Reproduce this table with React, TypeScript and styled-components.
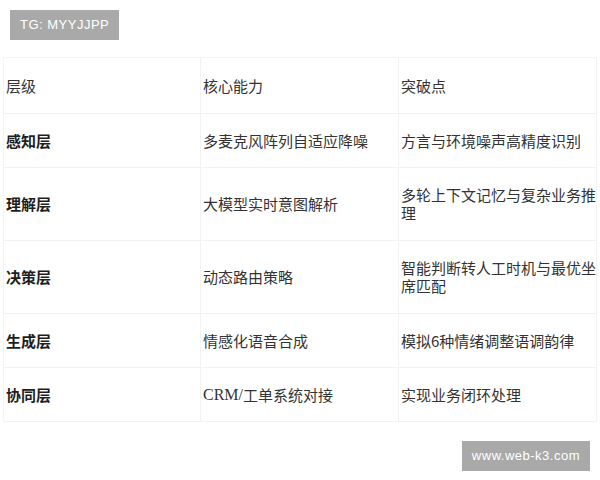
import React from "react";
import styled, { createGlobalStyle } from "styled-components";

const Global = createGlobalStyle`
  html, body { margin: 0; padding: 0; background: #fff; }
  body { font-family: "Noto Sans CJK SC", "Noto Sans", sans-serif; }
`;

const Page = styled.div`
  width: 600px;
  height: 480px;
  box-sizing: border-box;
  padding: 10px 8px 0 3px;
  display: flex;
  flex-direction: column;
`;

const Tag = styled.div`
  background: #a9a9a9;
  color: #fff;
  font-family: "Liberation Sans", Arial, sans-serif;
  font-size: 13px;
  letter-spacing: 0.5px;
  height: 30px;
  line-height: 30px;
  padding: 0 10px;
  box-sizing: border-box;
`;

const TopTag = styled(Tag)`
  align-self: flex-start;
  margin-left: 7px;
`;

const Watermark = styled(Tag)`
  align-self: flex-end;
  margin-top: 19px;
  margin-right: 2px;
`;

const Table = styled.div`
  margin-top: 17px;
  width: 593px;
  display: grid;
  grid-template-columns: 197px 198px 198px;
  border-top: 1px solid #f4f4f4;
  border-left: 1px solid #f4f4f4;
`;

const Cell = styled.div<{ $head?: boolean; $bold?: boolean }>`
  box-sizing: border-box;
  border-right: 1px solid #f2f2f2;
  border-bottom: 1px solid #f2f2f2;
  min-height: ${(p) => (p.$head ? 56 : 54)}px;
  padding: 0 0 0 2px;
  display: flex;
  align-items: center;
  font-size: 15px;
  line-height: 18px;
  color: ${(p) => (p.$bold ? "#1e1e1e" : "#333")};
  font-weight: ${(p) => (p.$bold ? 700 : 400)};
`;

const CellText = styled.span<{ $tall?: boolean }>`
  display: block;
  padding: ${(p) => (p.$tall ? "18px 0" : "0")};
`;

const Latin = styled.span`
  font-family: "Liberation Serif", "Times New Roman", serif;
  font-size: 16px;
`;

type Row = { name: string; core: React.ReactNode; point: string; tall?: boolean };

const rows: Row[] = [
  { name: "感知层", core: "多麦克风阵列自适应降噪", point: "方言与环境噪声高精度识别" },
  { name: "理解层", core: "大模型实时意图解析", point: "多轮上下文记忆与复杂业务推理", tall: true },
  { name: "决策层", core: "动态路由策略", point: "智能判断转人工时机与最优坐席匹配", tall: true },
  { name: "生成层", core: "情感化语音合成", point: "模拟6种情绪调整语调韵律" },
  {
    name: "协同层",
    core: (
      <>
        <Latin>CRM/</Latin>工单系统对接
      </>
    ),
    point: "实现业务闭环处理",
  },
];

export default function App() {
  return (
    <>
      <Global />
      <Page>
        <TopTag>TG: MYYJJPP</TopTag>
        <Table>
          <Cell $head>层级</Cell>
          <Cell $head>核心能力</Cell>
          <Cell $head>突破点</Cell>
          {rows.map((r) => (
            <React.Fragment key={r.name}>
              <Cell $bold>{r.name}</Cell>
              <Cell>{r.core}</Cell>
              <Cell>
                <CellText $tall={r.tall}>{r.point}</CellText>
              </Cell>
            </React.Fragment>
          ))}
        </Table>
        <Watermark>www.web-k3.com</Watermark>
      </Page>
    </>
  );
}
